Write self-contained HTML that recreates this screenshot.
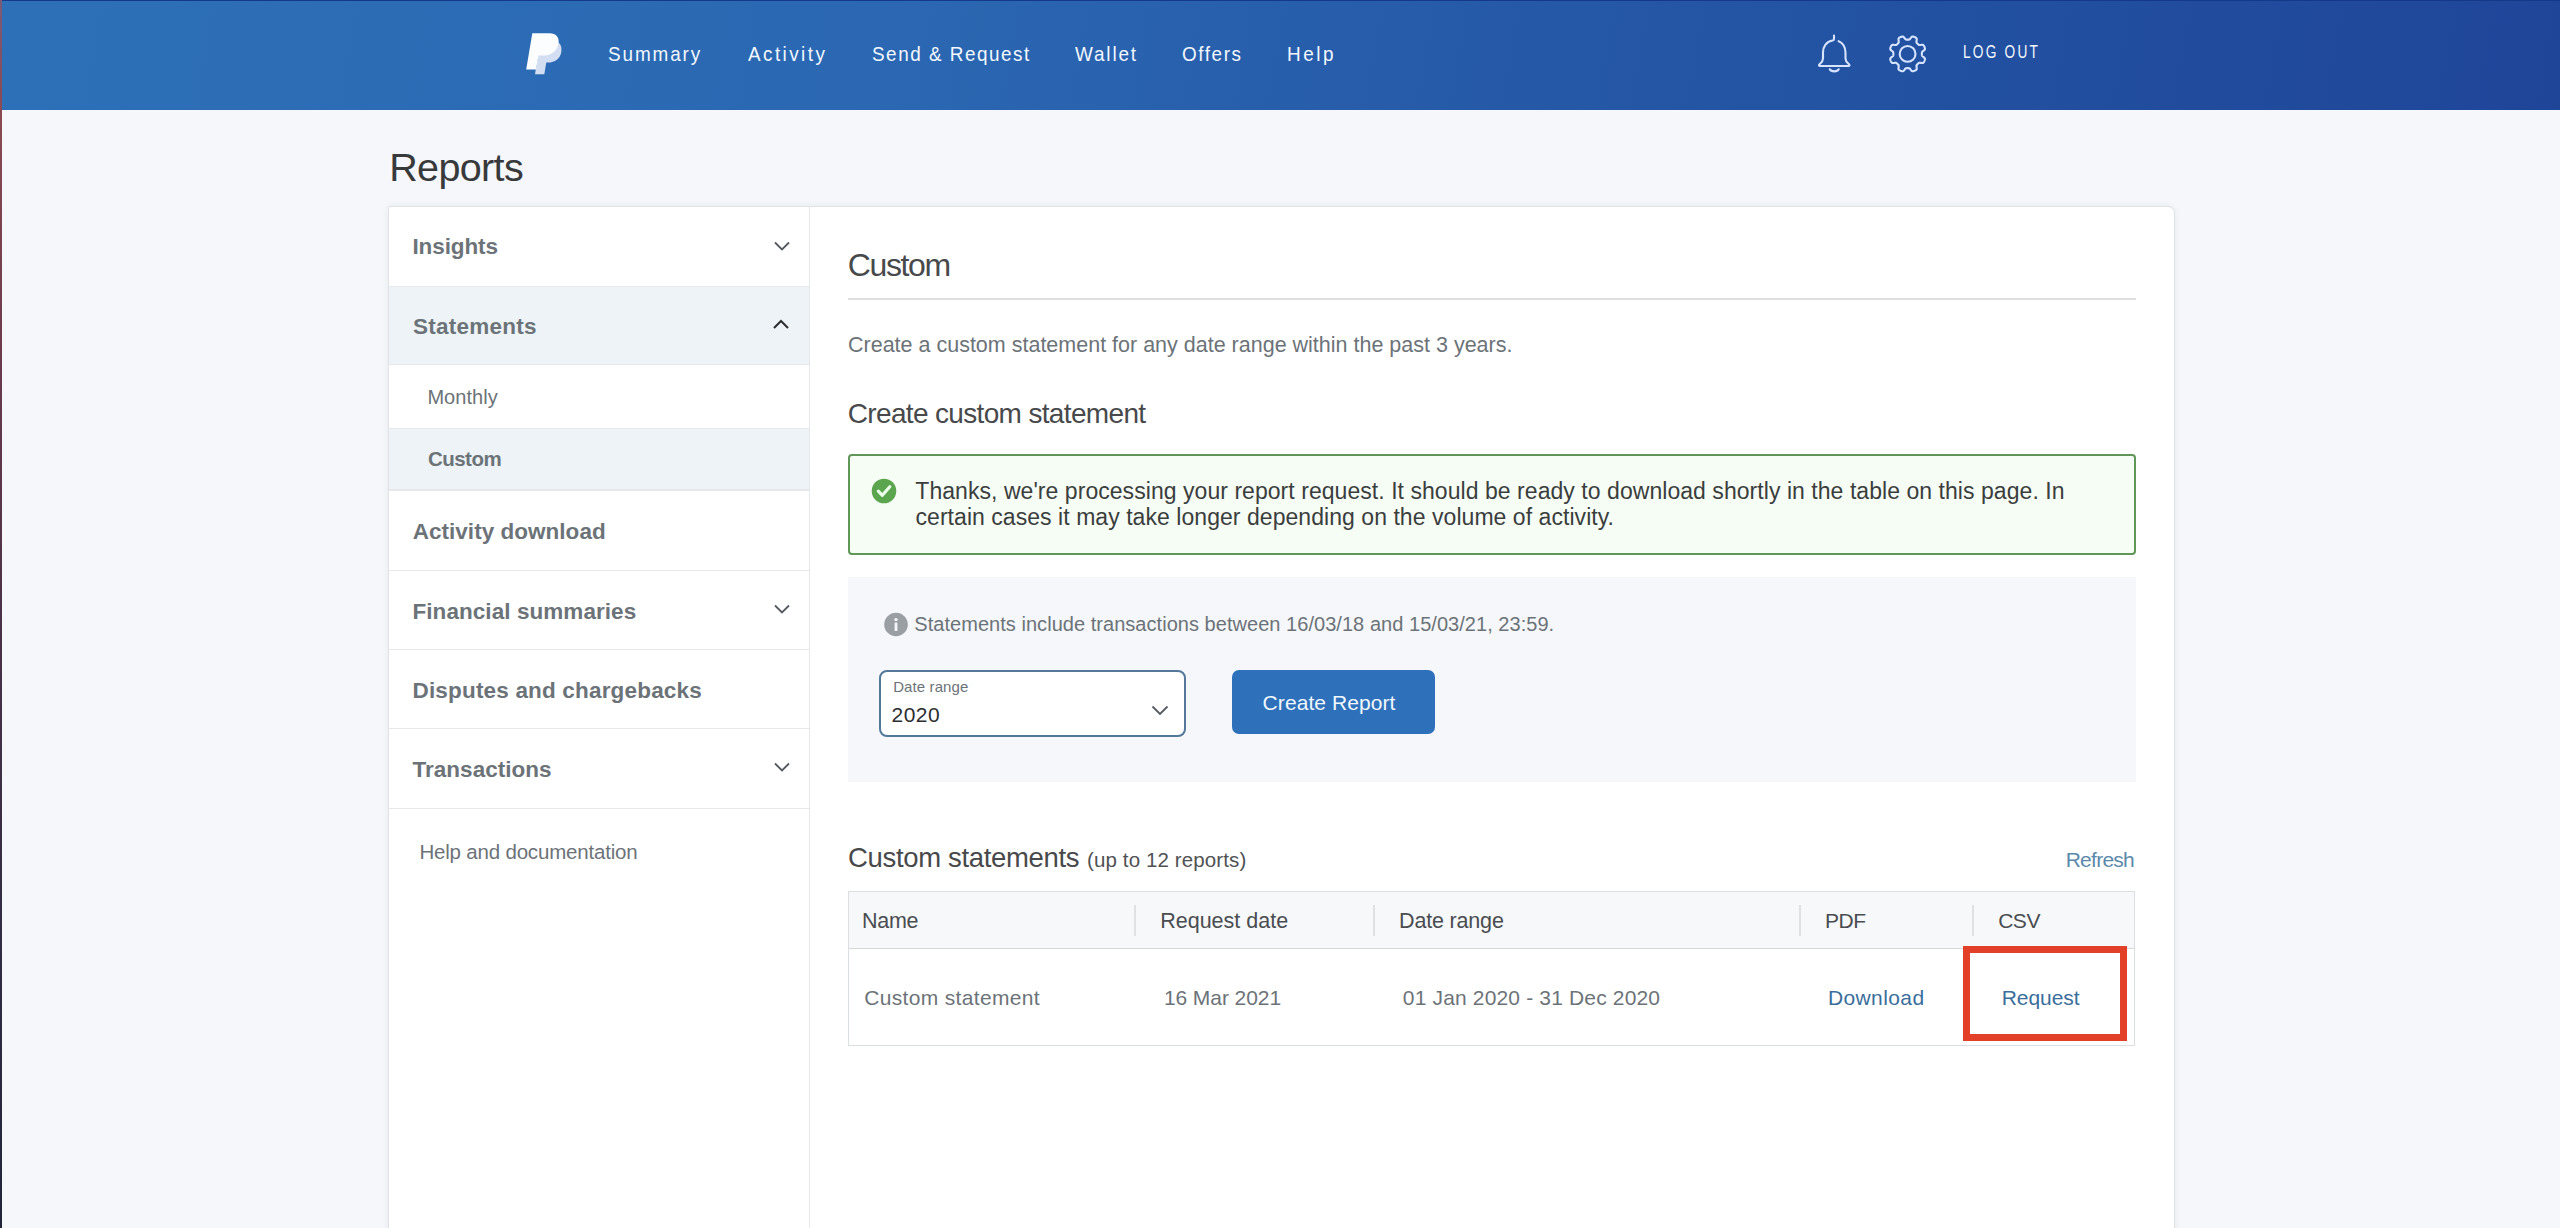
<!DOCTYPE html>
<html><head><meta charset="utf-8">
<style>
*{margin:0;padding:0;box-sizing:border-box}
html,body{width:2560px;height:1228px;overflow:hidden;background:#f5f7fa;font-family:"Liberation Sans",sans-serif}
.a{position:absolute;white-space:nowrap;line-height:1}
.b{position:absolute}
</style></head><body>
<div class="b" style="left:0;top:0;width:2560px;height:110px;background:linear-gradient(100deg,#2d70b8 0%,#2b67b2 35%,#2456a5 65%,#1f4599 100%)"></div>
<div class="b" style="left:0;top:0;width:2560px;height:1px;background:#14388a"></div>
<div class="b" style="left:0;top:0;width:2px;height:1228px;background:linear-gradient(#7a5a78 0%,#8a4a52 9%,#6a3a4c 30%,#4a3248 50%,#2a2a40 85%,#22253a 100%)"></div>

<!-- logo -->
<svg class="b" style="left:515px;top:25px" width="60" height="60" viewBox="515 25 60 60">
 <path d="M540.5 41 L553.5 41 C559.8 41 562.3 46 561.3 52 C560.3 58.5 555 62.6 548 62.6 L546.3 62.6 L544.3 74.3 L535 74.3 Z" fill="#d3def3"/>
 <path d="M532.3 33.2 L549.5 33.2 C556 33.2 559.3 37.5 558.6 42.5 C557.8 50 552 55.5 544.5 55.5 L538.5 55.5 L536 69.6 L526.2 69.6 Z" fill="#fbfdff"/>
</svg>

<!-- bell -->
<svg class="b" style="left:1805px;top:25px" width="60" height="60" viewBox="1805 25 60 60" fill="none" stroke="#d6e4ff" stroke-width="2.1" stroke-linecap="round" stroke-linejoin="round">
 <path d="M1834 35.5 L1834 39 C1834 39.8 1833.5 40.3 1832.5 40.5 C1826.5 41.5 1823 46.5 1823 52.5 L1823 58.5 C1823 61 1821.5 62.5 1820 63.8 C1818.6 65 1818.6 66 1820.3 66 L1848.2 66 C1849.9 66 1849.9 65 1848.5 63.8 C1847 62.5 1845.5 61 1845.5 58.5 L1845.5 52.5 C1845.5 47 1842.5 42.5 1838.6 41.2"/>
 <path d="M1829.8 69.3 C1831.2 72 1837.3 72 1838.7 69.3"/>
</svg>

<!-- gear -->
<svg class="b" style="left:1877px;top:24px" width="60" height="60" viewBox="1877 24 60 60" fill="none" stroke="#d6e4ff" stroke-width="2.1" stroke-linejoin="round">
 <path d="M1907.60 39.65 L1907.82 39.65 L1908.05 39.65 L1908.27 39.65 L1908.50 39.64 L1908.72 39.63 L1908.95 39.60 L1909.18 39.55 L1909.42 39.46 L1909.68 39.30 L1909.95 39.05 L1910.26 38.68 L1910.59 38.21 L1910.95 37.71 L1911.32 37.26 L1911.68 36.92 L1912.02 36.70 L1912.34 36.59 L1912.64 36.55 L1912.93 36.56 L1913.22 36.60 L1913.50 36.67 L1913.78 36.75 L1914.05 36.83 L1914.32 36.93 L1914.58 37.04 L1914.85 37.15 L1915.11 37.27 L1915.36 37.40 L1915.61 37.54 L1915.86 37.70 L1916.09 37.87 L1916.30 38.07 L1916.49 38.31 L1916.64 38.62 L1916.72 39.01 L1916.74 39.50 L1916.68 40.08 L1916.58 40.69 L1916.48 41.26 L1916.44 41.73 L1916.45 42.11 L1916.52 42.40 L1916.62 42.64 L1916.75 42.84 L1916.90 43.02 L1917.05 43.18 L1917.20 43.35 L1917.36 43.51 L1917.52 43.67 L1917.68 43.82 L1917.83 43.98 L1917.99 44.14 L1918.15 44.30 L1918.32 44.45 L1918.48 44.60 L1918.66 44.75 L1918.86 44.88 L1919.10 44.98 L1919.39 45.05 L1919.77 45.06 L1920.24 45.02 L1920.81 44.92 L1921.42 44.82 L1922.00 44.76 L1922.49 44.78 L1922.88 44.86 L1923.19 45.01 L1923.43 45.20 L1923.63 45.41 L1923.80 45.64 L1923.96 45.89 L1924.10 46.14 L1924.23 46.39 L1924.35 46.65 L1924.46 46.92 L1924.57 47.18 L1924.67 47.45 L1924.75 47.72 L1924.83 48.00 L1924.90 48.28 L1924.94 48.57 L1924.95 48.86 L1924.91 49.16 L1924.80 49.48 L1924.58 49.82 L1924.24 50.18 L1923.79 50.55 L1923.29 50.91 L1922.82 51.24 L1922.45 51.55 L1922.20 51.82 L1922.04 52.08 L1921.95 52.32 L1921.90 52.55 L1921.87 52.78 L1921.86 53.00 L1921.85 53.23 L1921.85 53.45 L1921.85 53.68 L1921.85 53.90 L1921.85 54.12 L1921.85 54.35 L1921.85 54.57 L1921.86 54.80 L1921.87 55.02 L1921.90 55.25 L1921.95 55.48 L1922.04 55.72 L1922.20 55.98 L1922.45 56.25 L1922.82 56.56 L1923.29 56.89 L1923.79 57.25 L1924.24 57.62 L1924.58 57.98 L1924.80 58.32 L1924.91 58.64 L1924.95 58.94 L1924.94 59.23 L1924.90 59.52 L1924.83 59.80 L1924.75 60.08 L1924.67 60.35 L1924.57 60.62 L1924.46 60.88 L1924.35 61.15 L1924.23 61.41 L1924.10 61.66 L1923.96 61.91 L1923.80 62.16 L1923.63 62.39 L1923.43 62.60 L1923.19 62.79 L1922.88 62.94 L1922.49 63.02 L1922.00 63.04 L1921.42 62.98 L1920.81 62.88 L1920.24 62.78 L1919.77 62.74 L1919.39 62.75 L1919.10 62.82 L1918.86 62.92 L1918.66 63.05 L1918.48 63.20 L1918.32 63.35 L1918.15 63.50 L1917.99 63.66 L1917.83 63.82 L1917.68 63.98 L1917.52 64.13 L1917.36 64.29 L1917.20 64.45 L1917.05 64.62 L1916.90 64.78 L1916.75 64.96 L1916.62 65.16 L1916.52 65.40 L1916.45 65.69 L1916.44 66.07 L1916.48 66.54 L1916.58 67.11 L1916.68 67.72 L1916.74 68.30 L1916.72 68.79 L1916.64 69.18 L1916.49 69.49 L1916.30 69.73 L1916.09 69.93 L1915.86 70.10 L1915.61 70.26 L1915.36 70.40 L1915.11 70.53 L1914.85 70.65 L1914.58 70.76 L1914.32 70.87 L1914.05 70.97 L1913.78 71.05 L1913.50 71.13 L1913.22 71.20 L1912.93 71.24 L1912.64 71.25 L1912.34 71.21 L1912.02 71.10 L1911.68 70.88 L1911.32 70.54 L1910.95 70.09 L1910.59 69.59 L1910.26 69.12 L1909.95 68.75 L1909.68 68.50 L1909.42 68.34 L1909.18 68.25 L1908.95 68.20 L1908.72 68.17 L1908.50 68.16 L1908.27 68.15 L1908.05 68.15 L1907.82 68.15 L1907.60 68.15 L1907.38 68.15 L1907.15 68.15 L1906.93 68.15 L1906.70 68.16 L1906.48 68.17 L1906.25 68.20 L1906.02 68.25 L1905.78 68.34 L1905.52 68.50 L1905.25 68.75 L1904.94 69.12 L1904.61 69.59 L1904.25 70.09 L1903.88 70.54 L1903.52 70.88 L1903.18 71.10 L1902.86 71.21 L1902.56 71.25 L1902.27 71.24 L1901.98 71.20 L1901.70 71.13 L1901.42 71.05 L1901.15 70.97 L1900.88 70.87 L1900.62 70.76 L1900.35 70.65 L1900.09 70.53 L1899.84 70.40 L1899.59 70.26 L1899.34 70.10 L1899.11 69.93 L1898.90 69.73 L1898.71 69.49 L1898.56 69.18 L1898.48 68.79 L1898.46 68.30 L1898.52 67.72 L1898.62 67.11 L1898.72 66.54 L1898.76 66.07 L1898.75 65.69 L1898.68 65.40 L1898.58 65.16 L1898.45 64.96 L1898.30 64.78 L1898.15 64.62 L1898.00 64.45 L1897.84 64.29 L1897.68 64.13 L1897.52 63.98 L1897.37 63.82 L1897.21 63.66 L1897.05 63.50 L1896.88 63.35 L1896.72 63.20 L1896.54 63.05 L1896.34 62.92 L1896.10 62.82 L1895.81 62.75 L1895.43 62.74 L1894.96 62.78 L1894.39 62.88 L1893.78 62.98 L1893.20 63.04 L1892.71 63.02 L1892.32 62.94 L1892.01 62.79 L1891.77 62.60 L1891.57 62.39 L1891.40 62.16 L1891.24 61.91 L1891.10 61.66 L1890.97 61.41 L1890.85 61.15 L1890.74 60.88 L1890.63 60.62 L1890.53 60.35 L1890.45 60.08 L1890.37 59.80 L1890.30 59.52 L1890.26 59.23 L1890.25 58.94 L1890.29 58.64 L1890.40 58.32 L1890.62 57.98 L1890.96 57.62 L1891.41 57.25 L1891.91 56.89 L1892.38 56.56 L1892.75 56.25 L1893.00 55.98 L1893.16 55.72 L1893.25 55.48 L1893.30 55.25 L1893.33 55.02 L1893.34 54.80 L1893.35 54.57 L1893.35 54.35 L1893.35 54.12 L1893.35 53.90 L1893.35 53.68 L1893.35 53.45 L1893.35 53.23 L1893.34 53.00 L1893.33 52.78 L1893.30 52.55 L1893.25 52.32 L1893.16 52.08 L1893.00 51.82 L1892.75 51.55 L1892.38 51.24 L1891.91 50.91 L1891.41 50.55 L1890.96 50.18 L1890.62 49.82 L1890.40 49.48 L1890.29 49.16 L1890.25 48.86 L1890.26 48.57 L1890.30 48.28 L1890.37 48.00 L1890.45 47.72 L1890.53 47.45 L1890.63 47.18 L1890.74 46.92 L1890.85 46.65 L1890.97 46.39 L1891.10 46.14 L1891.24 45.89 L1891.40 45.64 L1891.57 45.41 L1891.77 45.20 L1892.01 45.01 L1892.32 44.86 L1892.71 44.78 L1893.20 44.76 L1893.78 44.82 L1894.39 44.92 L1894.96 45.02 L1895.43 45.06 L1895.81 45.05 L1896.10 44.98 L1896.34 44.88 L1896.54 44.75 L1896.72 44.60 L1896.88 44.45 L1897.05 44.30 L1897.21 44.14 L1897.37 43.98 L1897.52 43.82 L1897.68 43.67 L1897.84 43.51 L1898.00 43.35 L1898.15 43.18 L1898.30 43.02 L1898.45 42.84 L1898.58 42.64 L1898.68 42.40 L1898.75 42.11 L1898.76 41.73 L1898.72 41.26 L1898.62 40.69 L1898.52 40.08 L1898.46 39.50 L1898.48 39.01 L1898.56 38.62 L1898.71 38.31 L1898.90 38.07 L1899.11 37.87 L1899.34 37.70 L1899.59 37.54 L1899.84 37.40 L1900.09 37.27 L1900.35 37.15 L1900.62 37.04 L1900.88 36.93 L1901.15 36.83 L1901.42 36.75 L1901.70 36.67 L1901.98 36.60 L1902.27 36.56 L1902.56 36.55 L1902.86 36.59 L1903.18 36.70 L1903.52 36.92 L1903.88 37.26 L1904.25 37.71 L1904.61 38.21 L1904.94 38.68 L1905.25 39.05 L1905.52 39.30 L1905.78 39.46 L1906.02 39.55 L1906.25 39.60 L1906.48 39.63 L1906.70 39.64 L1906.93 39.65 L1907.15 39.65 L1907.38 39.65 Z"/>
 <circle cx="1907.6" cy="53.9" r="7.9"/>
</svg>

<!-- card -->
<div class="b" style="left:388px;top:206px;width:1787px;height:1040px;background:#fff;border:1px solid #e0e2e6;border-radius:2px 7px 0 0;box-shadow:0 0 6px rgba(40,50,70,0.07)"></div>
<!-- sidebar -->
<div class="b" style="left:809px;top:207px;width:1px;height:1030px;background:#e6e8eb"></div>
<div class="b" style="left:389px;top:287px;width:420px;height:78px;background:#edf3f7"></div>
<div class="b" style="left:389px;top:429px;width:420px;height:61px;background:#edf3f7"></div>
<div class="b" style="left:389px;top:286px;width:420px;height:1px;background:#e6e8eb"></div>
<div class="b" style="left:389px;top:364px;width:420px;height:1px;background:#e6e8eb"></div>
<div class="b" style="left:389px;top:428px;width:420px;height:1px;background:#e6e8eb"></div>
<div class="b" style="left:389px;top:489px;width:420px;height:2px;background:#e6e8eb"></div>
<div class="b" style="left:389px;top:570px;width:420px;height:1px;background:#e6e8eb"></div>
<div class="b" style="left:389px;top:649px;width:420px;height:1px;background:#e6e8eb"></div>
<div class="b" style="left:389px;top:728px;width:420px;height:1px;background:#e6e8eb"></div>
<div class="b" style="left:389px;top:808px;width:420px;height:1px;background:#e6e8eb"></div>
<!-- chevrons -->
<svg class="b" style="left:770px;top:237px" width="24" height="20" viewBox="0 0 24 20" fill="none" stroke="#545a60" stroke-width="1.8"><path d="M5 5.5 L12 12.5 L19 5.5"/></svg>
<svg class="b" style="left:769px;top:314px" width="24" height="20" viewBox="0 0 24 20" fill="none" stroke="#2c2e2f" stroke-width="2"><path d="M5 14 L12 7 L19 14"/></svg>
<svg class="b" style="left:770px;top:600px" width="24" height="20" viewBox="0 0 24 20" fill="none" stroke="#545a60" stroke-width="1.8"><path d="M5 5.5 L12 12.5 L19 5.5"/></svg>
<svg class="b" style="left:770px;top:758px" width="24" height="20" viewBox="0 0 24 20" fill="none" stroke="#545a60" stroke-width="1.8"><path d="M5 5.5 L12 12.5 L19 5.5"/></svg>

<!-- main -->
<div class="b" style="left:848px;top:298px;width:1288px;height:2px;background:#dddfe1"></div>
<!-- alert -->
<div class="b" style="left:848px;top:454px;width:1288px;height:101px;background:#f6fdf4;border:2px solid #619659;border-radius:4px"></div>
<svg class="b" style="left:871px;top:478px" width="26" height="26" viewBox="0 0 26 26"><circle cx="13" cy="13" r="12.3" fill="#5aa54e"/><path d="M7.3 13.2 L11.3 17.3 L18.8 8.8" fill="none" stroke="#eaffea" stroke-width="3.2" stroke-linecap="round" stroke-linejoin="round"/></svg>
<!-- gray box -->
<div class="b" style="left:848px;top:577px;width:1288px;height:205px;background:#f5f7fa"></div>
<svg class="b" style="left:884px;top:612px" width="24" height="25" viewBox="0 0 24 25"><circle cx="12" cy="12.5" r="11.8" fill="#9a9fa3"/><circle cx="12" cy="7.6" r="1.7" fill="#f5f7fa"/><rect x="10.6" y="10.6" width="2.8" height="8.3" fill="#f5f7fa"/></svg>
<!-- select -->
<div class="b" style="left:879px;top:670px;width:307px;height:67px;background:#fff;border:2px solid #537899;border-radius:8px"></div>
<svg class="b" style="left:1148px;top:702px" width="24" height="16" viewBox="0 0 24 16" fill="none" stroke="#545a60" stroke-width="1.8"><path d="M4.5 4.5 L12 12 L19.5 4.5"/></svg>
<!-- button -->
<div class="b" style="left:1232px;top:670px;width:203px;height:64px;background:#2e70b9;border-radius:7px"></div>
<!-- table -->
<div class="b" style="left:848px;top:891px;width:1287px;height:155px;background:#fff;border:1px solid #dcdfe2"></div>
<div class="b" style="left:849px;top:892px;width:1285px;height:56px;background:#f6f8fa"></div>
<div class="b" style="left:849px;top:948px;width:1285px;height:1px;background:#d6d9dc"></div>
<div class="b" style="left:1134px;top:905px;width:2px;height:31px;background:#dfe1e3"></div>
<div class="b" style="left:1373px;top:905px;width:2px;height:31px;background:#dfe1e3"></div>
<div class="b" style="left:1799px;top:905px;width:2px;height:31px;background:#dfe1e3"></div>
<div class="b" style="left:1972px;top:905px;width:2px;height:31px;background:#dfe1e3"></div>
<!-- red box -->
<div class="b" style="left:1963px;top:946px;width:164px;height:95px;border:7.5px solid #e3402a"></div>

<div class="a" style="left:608.3px;top:43.1px;font-size:21px;letter-spacing:2.11px;color:#f2f8ff;transform:scaleX(0.9);transform-origin:0 0">Summary</div>
<div class="a" style="left:747.9px;top:43.1px;font-size:21px;letter-spacing:2.7px;color:#f2f8ff;transform:scaleX(0.9);transform-origin:0 0">Activity</div>
<div class="a" style="left:871.7px;top:43.1px;font-size:21px;letter-spacing:1.68px;color:#f2f8ff;transform:scaleX(0.9);transform-origin:0 0">Send &amp; Request</div>
<div class="a" style="left:1075.2px;top:43.1px;font-size:21px;letter-spacing:2.05px;color:#f2f8ff;transform:scaleX(0.9);transform-origin:0 0">Wallet</div>
<div class="a" style="left:1182.3px;top:43.1px;font-size:21px;letter-spacing:1.76px;color:#f2f8ff;transform:scaleX(0.9);transform-origin:0 0">Offers</div>
<div class="a" style="left:1286.7px;top:43.1px;font-size:21px;letter-spacing:2.83px;color:#f2f8ff;transform:scaleX(0.9);transform-origin:0 0">Help</div>
<div class="a" style="left:1963.3px;top:42.5px;font-size:18.5px;letter-spacing:3.01px;color:#f2f8ff;transform:scaleX(0.74);transform-origin:0 0">LOG OUT</div>
<div class="a" style="left:389.2px;top:147.6px;font-size:39.5px;letter-spacing:-0.63px;color:#38393b">Reports</div>
<div class="a" style="left:412.4px;top:236px;font-size:22.5px;letter-spacing:-0.09px;color:#6c7378;font-weight:bold">Insights</div>
<div class="a" style="left:413px;top:316px;font-size:22.5px;letter-spacing:0.25px;color:#6c7378;font-weight:bold">Statements</div>
<div class="a" style="left:427.4px;top:387.1px;font-size:20px;letter-spacing:0.06px;color:#6c7378">Monthly</div>
<div class="a" style="left:428px;top:448.9px;font-size:20.5px;letter-spacing:-0.54px;color:#6c7378;font-weight:bold">Custom</div>
<div class="a" style="left:412.7px;top:521.2px;font-size:22.5px;letter-spacing:0.03px;color:#6c7378;font-weight:bold">Activity download</div>
<div class="a" style="left:412.5px;top:600.7px;font-size:22.5px;letter-spacing:0.06px;color:#6c7378;font-weight:bold">Financial summaries</div>
<div class="a" style="left:412.5px;top:679.5px;font-size:22.5px;letter-spacing:0.18px;color:#6c7378;font-weight:bold">Disputes and chargebacks</div>
<div class="a" style="left:412.5px;top:758.9px;font-size:22.5px;letter-spacing:0.02px;color:#6c7378;font-weight:bold">Transactions</div>
<div class="a" style="left:419.4px;top:842.2px;font-size:20.5px;letter-spacing:-0.19px;color:#6c7378">Help and documentation</div>
<div class="a" style="left:847.8px;top:248.9px;font-size:32px;letter-spacing:-1.39px;color:#47494b">Custom</div>
<div class="a" style="left:848px;top:335.2px;font-size:21.5px;letter-spacing:-0.0px;color:#6c7378">Create a custom statement for any date range within the past 3 years.</div>
<div class="a" style="left:847.8px;top:399.8px;font-size:28px;letter-spacing:-0.66px;color:#47494b">Create custom statement</div>
<div class="a" style="left:915.3px;top:480.2px;font-size:23px;letter-spacing:0.05px;color:#3b3d3e">Thanks, we&#x27;re processing your report request. It should be ready to download shortly in the table on this page. In</div>
<div class="a" style="left:915.5px;top:505.8px;font-size:23px;letter-spacing:0.05px;color:#3b3d3e">certain cases it may take longer depending on the volume of activity.</div>
<div class="a" style="left:914.3px;top:613.8px;font-size:20px;letter-spacing:0.04px;color:#6c7378">Statements include transactions between 16/03/18 and 15/03/21, 23:59.</div>
<div class="a" style="left:893.2px;top:679.1px;font-size:15px;letter-spacing:0.1px;color:#6c7378">Date range</div>
<div class="a" style="left:891.6px;top:703.5px;font-size:21px;letter-spacing:0.45px;color:#2c2e2f">2020</div>
<div class="a" style="left:1262.6px;top:692.1px;font-size:21px;letter-spacing:0.08px;color:#f0f8ff">Create Report</div>
<div class="a" style="left:848px;top:843.7px;font-size:27.5px;letter-spacing:-0.33px;color:#47494b">Custom statements</div>
<div class="a" style="left:1087.1px;top:849.6px;font-size:20.5px;letter-spacing:0.11px;color:#505254">(up to 12 reports)</div>
<div class="a" style="left:2065.7px;top:849.1px;font-size:21px;letter-spacing:-0.74px;color:#5b89ab">Refresh</div>
<div class="a" style="left:862.1px;top:910.8px;font-size:21.5px;letter-spacing:-0.33px;color:#4a4d50">Name</div>
<div class="a" style="left:1160.2px;top:910.8px;font-size:21.5px;letter-spacing:-0.0px;color:#4a4d50">Request date</div>
<div class="a" style="left:1399.1px;top:910.8px;font-size:21.5px;letter-spacing:-0.18px;color:#4a4d50">Date range</div>
<div class="a" style="left:1824.9px;top:910px;font-size:21px;letter-spacing:-0.39px;color:#4a4d50">PDF</div>
<div class="a" style="left:1998.2px;top:910px;font-size:21px;letter-spacing:-0.49px;color:#4a4d50">CSV</div>
<div class="a" style="left:864.2px;top:986.8px;font-size:21px;letter-spacing:0.34px;color:#6c7378">Custom statement</div>
<div class="a" style="left:1163.9px;top:986.8px;font-size:21px;letter-spacing:-0.07px;color:#6c7378">16 Mar 2021</div>
<div class="a" style="left:1402.8px;top:986.8px;font-size:21px;letter-spacing:0.16px;color:#6c7378">01 Jan 2020 - 31 Dec 2020</div>
<div class="a" style="left:1827.9px;top:987px;font-size:21px;letter-spacing:0.4px;color:#3a6e9b">Download</div>
<div class="a" style="left:2001.7px;top:987px;font-size:21px;letter-spacing:-0.05px;color:#3a6e9b">Request</div>
</body></html>
